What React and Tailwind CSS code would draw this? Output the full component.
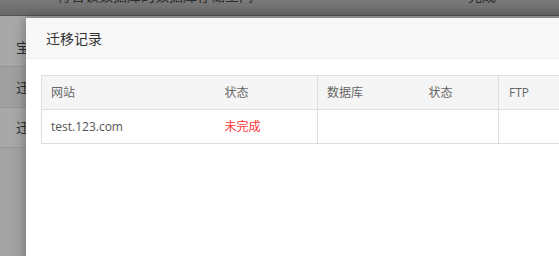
export default function App() {
  const cjk = { fontFamily: '"Open Sans", "Noto Sans CJK SC", sans-serif' }
  return (
    <div className="relative w-[559px] h-[256px] overflow-hidden bg-[#a3a3a3]" style={cjk}>
      {/* dimmed page behind the dialog */}
      <div className="h-[16px] bg-gradient-to-b from-[#7a7a7a] to-[#696969] border-b border-[#545454] flex justify-between overflow-hidden">
        <span className="ml-[57px] -mt-[12px] text-[14px] leading-[16px] text-[#2c2c2c]">符合该数据库的数据库存储空间</span>
        <span className="mr-[63px] -mt-[12px] text-[14px] leading-[16px] text-[#2c2c2c]">完成</span>
      </div>
      <div className="w-[26px] overflow-hidden whitespace-nowrap flex flex-col text-[14px] text-[#2e2e2e]">
        <div className="h-[51px] bg-[#a8a8a8] border-b border-[#969696] flex items-center pl-[16px] pt-[12px]">宝塔</div>
        <div className="h-[41px] bg-[#a0a0a0] border-b border-[#969696] flex items-center pl-[16px]">迁移</div>
        <div className="h-[40px] bg-[#a8a8a8] border-b border-[#999999] flex items-center pl-[16px]">迁移</div>
      </div>

      {/* dialog */}
      <div className="absolute left-[26px] top-[18px] w-[600px] h-[300px] bg-white shadow-[0_0_12px_rgba(0,0,0,0.35)]">
        <div className="h-[41px] bg-[#f8f8f8] border-b border-[#eeeeee] flex items-center pl-[20px] text-[14px] text-[#333333]">
          迁移记录
        </div>
        <div className="pl-[15px] pt-[16px]">
          <table className="border-collapse text-[12px] text-[#666666]">
            <thead>
              <tr className="h-[34px] bg-[#f5f5f5]">
                <th className="border-y border-l border-[#dddddd] font-normal text-left pl-[9px] w-[174px]">网站</th>
                <th className="border-y border-r border-[#dddddd] font-normal text-left pl-[9px] w-[102px]">状态</th>
                <th className="border-y border-l border-[#dddddd] font-normal text-left pl-[9px] w-[102px]">数据库</th>
                <th className="border-y border-r border-[#dddddd] font-normal text-left pl-[9px] w-[79px]">状态</th>
                <th className="border border-[#dddddd] font-normal text-left pl-[10px] w-[100px]">FTP</th>
              </tr>
            </thead>
            <tbody>
              <tr className="h-[34px]">
                <td className="border-y border-l border-[#dddddd] pl-[9px] text-[#555555]">test.123.com</td>
                <td className="border-y border-r border-[#dddddd] pl-[9px] text-[#ff3333]">未完成</td>
                <td className="border-y border-l border-[#dddddd] pl-[9px]"></td>
                <td className="border-y border-r border-[#dddddd] pl-[9px]"></td>
                <td className="border border-[#dddddd] pl-[10px]"></td>
              </tr>
            </tbody>
          </table>
        </div>
      </div>
    </div>
  )
}
